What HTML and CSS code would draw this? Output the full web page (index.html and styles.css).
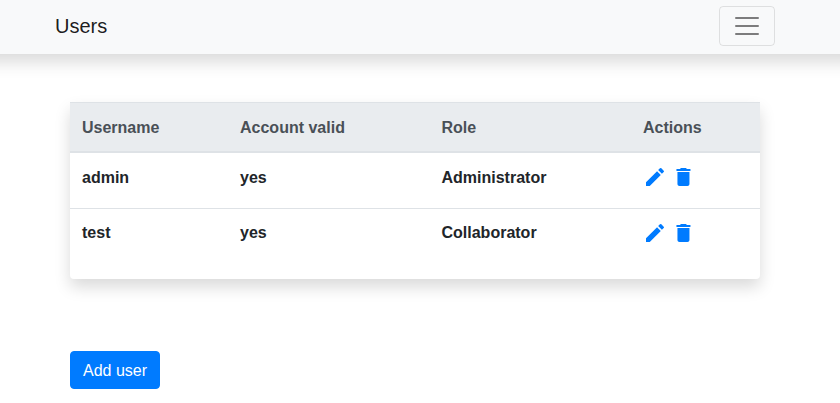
FILE: index.html
```html
<!DOCTYPE html>
<html lang="en">
<head>
<meta charset="utf-8">
<title>Users</title>
<link rel="stylesheet" href="styles.css">
</head>
<body>
<nav class="navbar">
  <a class="brand">Users</a>
  <button class="toggler" aria-label="Toggle navigation"><svg width="30" height="30" viewBox="0 0 30 30"><path stroke="rgba(0,0,0,.5)" stroke-width="2" stroke-linecap="round" stroke-miterlimit="10" d="M4 7h22M4 15h22M4 23h22"/></svg></button>
</nav>
<main class="container">
  <div class="card">
    <table class="table">
      <thead><tr><th class="c1">Username</th><th class="c2">Account valid</th><th class="c3">Role</th><th class="c4">Actions</th></tr></thead>
      <tbody>
        <tr><td>admin</td><td>yes</td><td>Administrator</td><td class="actions"><div class="icons"><svg viewBox="0 0 24 24"><path d="M3 17.25V21h3.75L17.81 9.94l-3.75-3.75L3 17.25zM20.71 7.04a1 1 0 0 0 0-1.41l-2.34-2.34a1 1 0 0 0-1.41 0l-1.83 1.83 3.75 3.75 1.83-1.83z"/></svg><svg viewBox="-0.45 0 24 24"><path d="M6 19c0 1.1.9 2 2 2h8c1.1 0 2-.9 2-2V7H6v12zM19 4h-3.5l-1-1h-5l-1 1H5v2h14V4z"/></svg></div></td></tr>
        <tr><td>test</td><td>yes</td><td>Collaborator</td><td class="actions"><div class="icons"><svg viewBox="0 0 24 24"><path d="M3 17.25V21h3.75L17.81 9.94l-3.75-3.75L3 17.25zM20.71 7.04a1 1 0 0 0 0-1.41l-2.34-2.34a1 1 0 0 0-1.41 0l-1.83 1.83 3.75 3.75 1.83-1.83z"/></svg><svg viewBox="-0.45 0 24 24"><path d="M6 19c0 1.1.9 2 2 2h8c1.1 0 2-.9 2-2V7H6v12zM19 4h-3.5l-1-1h-5l-1 1H5v2h14V4z"/></svg></div></td></tr>
      </tbody>
    </table>
  </div>
  <button class="add">Add user</button>
</main>
</body>
</html>
```
FILE: styles.css
```css
* { box-sizing: border-box; }
body { margin: 0; font: 16px/24px "Liberation Sans", Arial, sans-serif; color: #212529; background: #fff; overflow: hidden; }
.navbar { display: flex; justify-content: space-between; align-items: center; height: 54px; margin: 0 -30px; padding: 0 95px 2px 85px; background: #f8f9fa; box-shadow: 0 8px 16px rgba(0,0,0,.15); }
.brand { font-size: 20px; line-height: 30px; color: rgba(0,0,0,.9); }
.toggler { width: 56px; height: 40px; padding: 0; display: flex; align-items: center; justify-content: center; border: 1px solid rgba(0,0,0,.1); border-radius: 4px; background: transparent; }
.toggler svg { flex: none; }
.container { width: 690px; margin: 48px 0 0 70px; }
.card { height: 177px; border-radius: 4px; box-shadow: 0 8px 16px rgba(0,0,0,.15); }
.table { width: 100%; table-layout: fixed; border-collapse: separate; border-spacing: 0; font-weight: 700; }
th, td { padding: 12px; text-align: left; vertical-align: top; }
th { height: 51px; padding-top: 13px; padding-bottom: 11px; background: #e9ecef; color: #495057; border-top: 1px solid #dee2e6; border-bottom: 2px solid #dee2e6; }
td { height: 55px; padding-top: 13px; }
td.actions { padding-top: 12px; }
tr + tr td { padding-top: 12px; border-top: 1px solid #dee2e6; }
.c1 { width: 158px; }
.c2, .c3 { width: 201.5px; }
.icons { display: flex; gap: 4px; }
.icons svg { width: 24px; height: 24px; fill: #007bff; }
.add { display: block; width: 90px; height: 38px; margin-top: 72px; padding: 1px 0 0; font: inherit; line-height: 25px; color: #fff; background: #007bff; border: 1px solid #007bff; border-radius: 4px; }
```
